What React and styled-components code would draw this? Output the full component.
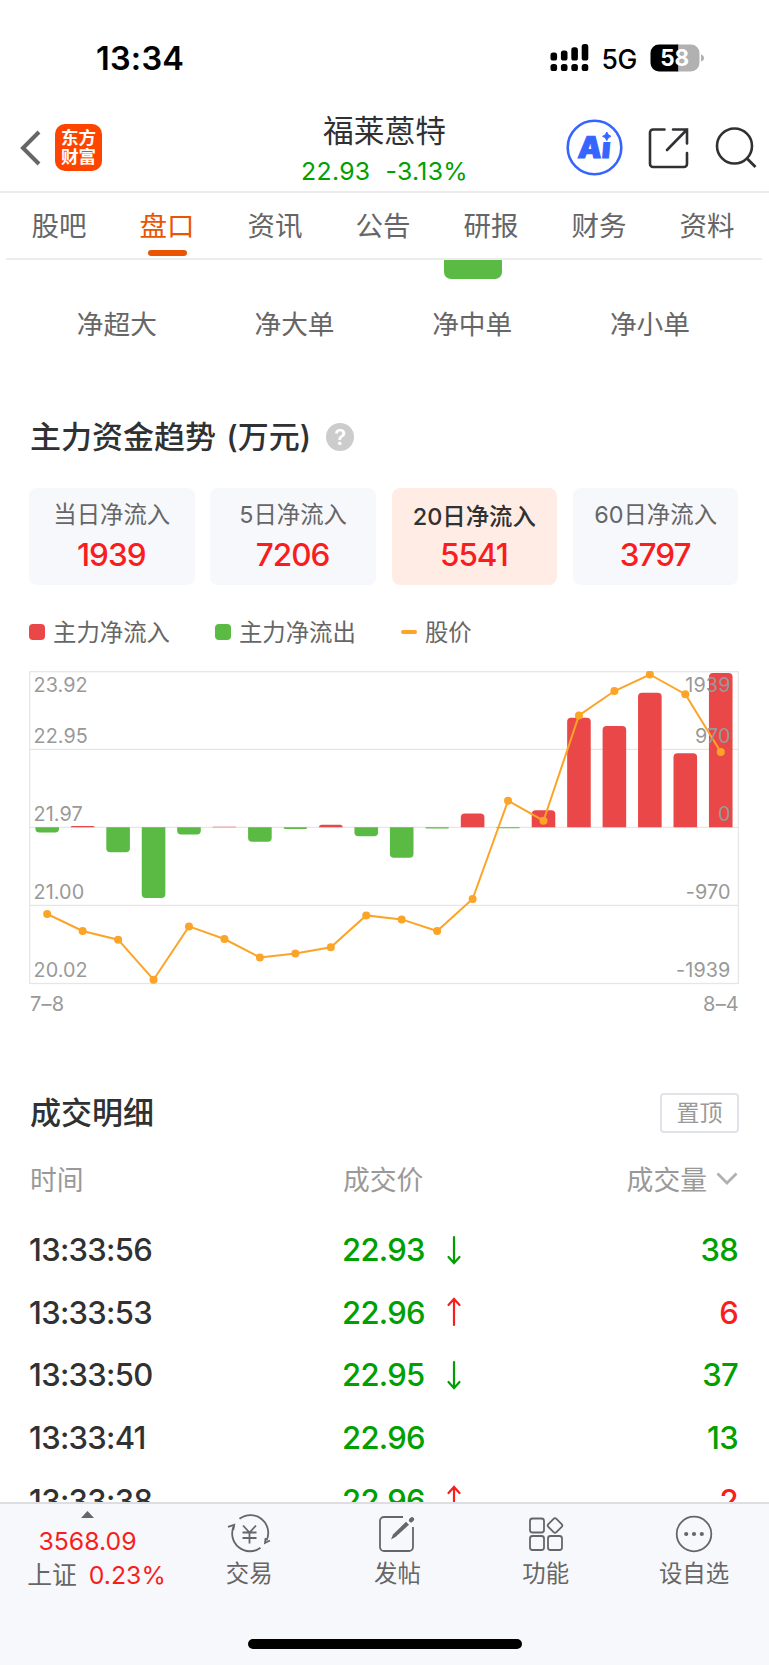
import React from 'react'
import styled, { createGlobalStyle } from 'styled-components'

const GlobalStyle = createGlobalStyle`
    * {
        box-sizing: border-box;
    }

    body {
        margin: 0;
        background: #fff;
        font-family: 'Inter', 'Noto Sans CJK SC', sans-serif;
        color: #303133;
    }
`;

const Screen = styled.div`
    width: 769px;
    height: 1665px;
    display: flex;
    flex-direction: column;
    overflow: hidden;
    background: #fff;
`;

const StatusBar = styled.div`
    height: 98px;
    padding: 17px 65px 0 96px;
    display: flex;
    align-items: center;
    flex-shrink: 0;
    color: #000;
`;

const Clock = styled.span`
    flex: 1;
    padding-top: 1px;
    font-size: 32.5px;
    font-weight: 600;
    letter-spacing: 0.2px;
`;

const Network = styled.span`
    margin: 2px 13px 0 12px;
    font-size: 26.5px;
    font-weight: 500;
    letter-spacing: -0.3px;
`;

const NavBar = styled.header`
    height: 95px;
    padding: 0 12px 0 20px;
    display: grid;
    grid-template-columns: 1fr auto 1fr;
    align-items: center;
    flex-shrink: 0;
    border-bottom: 2px solid #ececec;
`;

const NavSide = styled.div`
    height: 93px;
    padding-top: 6px;
    display: flex;
    align-items: center;
    justify-content: ${props => props.$end ? 'flex-end' : 'flex-start'};
    gap: ${props => props.$end ? '25px' : '14px'};
`;

const AppLogo = styled.div`
    width: 47px;
    height: 47px;
    border-radius: 10px;
    background: #ff4400;
    color: #fff;
    font-size: 17.5px;
    font-weight: 700;
    line-height: 19px;
    padding-top: 4px;
    text-align: center;
`;

const StockTitle = styled.div`
    display: flex;
    flex-direction: column;
    align-items: center;
    padding-top: 12px;
    margin-right: 8px;
`;

const StockName = styled.h1`
    margin: 0;
    font-size: 30.7px;
    font-weight: 400;
    line-height: 42px;
`;

const StockQuote = styled.div`
    display: flex;
    gap: 15px;
    font-size: 24.8px;
    line-height: 39px;
    letter-spacing: 0.3px;
    color: #00a000;
`;

const Tabs = styled.nav`
    height: 67px;
    margin: 0 7px 0 6px;
    display: grid;
    grid-template-columns: repeat(7, 108px);
    flex-shrink: 0;
    border-bottom: 2px solid #ececec;
`;

const Tab = styled.div`
    display: flex;
    flex-direction: column;
    align-items: center;
    height: 65px;
    font-size: 27.5px;
    line-height: 67px;
    padding-right: 2px;
    color: ${props => props.$active ? '#ea5504' : '#666'};

    &::after {
        content: '';
        width: 39px;
        height: 6px;
        margin: -10px 0 0 1px;
        border-radius: 3px;
        background: ${props => props.$active ? '#ea5504' : 'transparent'};
    }
`;

const Content = styled.main`
    flex: 1;
    min-height: 0;
    overflow: hidden;
    padding: 0 30px 0 29px;
`;

const OrderSizes = styled.div`
    display: grid;
    grid-template-columns: repeat(4, 177.7px);
`;

const OrderSize = styled.div`
    height: 90px;
    display: flex;
    flex-direction: column;
    align-items: center;
    font-size: 26.7px;
    line-height: 90px;
    text-indent: -2px;
    color: #666;

    &::before {
        content: '';
        width: 58px;
        height: 19px;
        flex-shrink: 0;
        border-radius: 0 0 7px 7px;
        background: ${props => props.$out ? '#5aba43' : 'transparent'};
    }
`;

const SectionHead = styled.div`
    height: 42px;
    margin-top: ${props => props.$top}px;
    display: flex;
    align-items: center;
    justify-content: ${props => props.$spread ? 'space-between' : 'flex-start'};
    gap: 15px;
`;

const SectionTitle = styled.h2`
    margin: 0;
    padding: 0 0 0 1px;
    font-size: 31px;
    font-weight: 500;
    line-height: 41px;
    height: 42px;
    word-spacing: 2px;
    white-space: pre;
`;

const Help = styled.span`
    width: 28px;
    height: 28px;
    border-radius: 50%;
    background: #ccc;
    color: #fff;
    font-size: 22px;
    font-weight: 600;
    line-height: 28px;
    text-align: center;
`;

const Periods = styled.div`
    margin-top: 30px;
    display: grid;
    grid-template-columns: repeat(4, 165.6px);
    gap: 15.7px;
`;

const Period = styled.div`
    height: 97px;
    padding-top: ${props => props.$active ? 12 : 10}px;
    border-radius: 8px;
    background: ${props => props.$active ? '#ffede5' : '#f7f8fb'};
    color: ${props => props.$active ? '#303133' : '#666'};
    font-size: 23.4px;
    font-weight: ${props => props.$active ? 500 : 400};
    line-height: 34px;
    text-align: center;
`;

const PeriodValue = styled.div`
    margin-top: ${props => props.$active ? 3 : 5}px;
    font-size: 31.5px;
    font-weight: 500;
    line-height: 36px;
    letter-spacing: -1px;
    text-indent: -1px;
    color: #f91e1e;
`;

const Legend = styled.div`
    height: 34px;
    margin-top: 30px;
    display: flex;
    gap: 45px;
    font-size: 23.4px;
    line-height: 35px;
    color: #666;
`;

const LegendItem = styled.div`
    display: flex;
    gap: 8px;

    &::before {
        content: '';
        width: 16px;
        height: ${props => props.$line ? 4 : 16}px;
        margin-top: ${props => props.$line ? 15 : 9}px;
        border-radius: ${props => props.$line ? 2 : 4}px;
        background: ${props => props.$color};
    }
`;

const Chart = styled.svg`
    display: block;
    margin-top: 22px;
    font-size: 19.8px;
`;

const DateAxis = styled.div`
    display: flex;
    justify-content: space-between;
    margin-top: 2px;
    padding: 0 0 0 1px;
    font-size: 20px;
    line-height: 34px;
    letter-spacing: 0.2px;
    color: #999;
`;

const PinButton = styled.button`
    width: 79px;
    height: 40px;
    padding: 0;
    border: 2px solid #e2e3e9;
    border-radius: 4px;
    background: #fff;
    color: #999;
    font-family: inherit;
    font-size: 23px;
    line-height: 36px;
`;

const TradeRow = styled.div`
    height: 62.6px;
    padding-right: 1px;
    display: grid;
    grid-template-columns: 313px 98px 1fr auto;
    align-items: center;
    font-size: 31px;
    font-weight: 500;
    letter-spacing: -0.7px;
`;

const TradeHead = styled(TradeRow)`
    height: 64px;
    margin: 12px 0 8.5px;
    padding-left: 1px;
    grid-template-columns: 313px 1fr auto;
    font-size: 26.8px;
    font-weight: 400;
    letter-spacing: 0;
    color: #999;
`;

const Volume = styled.span`
    display: flex;
    align-items: center;
    gap: 9px;

    svg {
        margin-top: 2px;
    }
`;

const Amount = styled.span`
    color: ${props => props.$up ? '#f91e1e' : '#00a000'};
`;

const BottomBar = styled.footer`
    height: 163px;
    flex-shrink: 0;
    display: flex;
    flex-direction: column;
    align-items: center;
    justify-content: space-between;
    border-top: 2px solid #dcdee1;
    background: #f7f8fb;
`;

const Actions = styled.div`
    align-self: stretch;
    display: grid;
    grid-template-columns: 175px repeat(4, 148.3px);
`;

const IndexQuote = styled.div`
    padding-top: 7px;
    display: flex;
    flex-direction: column;
    align-items: center;
    font-size: 24.8px;
    line-height: 34px;
    color: #f91e1e;
`;

const IndexValue = styled.span`
    margin-top: 6px;
`;

const IndexChange = styled.span`
    display: flex;
    gap: 12px;
    padding-left: 18px;
`;

const IndexName = styled.span`
    color: #666;
`;

const Action = styled.div`
    padding-top: 10px;
    display: flex;
    flex-direction: column;
    align-items: center;
    font-size: 23.4px;
    line-height: 34px;
    color: #666;
`;

const ActionIcon = styled.svg`
    display: block;
    width: 44px;
    height: 40px;
    margin-bottom: 3px;
    fill: none;
    stroke: #666;
    stroke-width: 1.8;
`;

const HomeIndicator = styled.div`
    width: 274px;
    height: 10px;
    margin-bottom: 16px;
    border-radius: 5px;
    background: #000;
`;

const tabs = ['股吧', '盘口', '资讯', '公告', '研报', '财务', '资料']
const orderSizes = ['净超大', '净大单', '净中单', '净小单']

const periods = [
    { label: '当日净流入', value: '1939' },
    { label: '5日净流入', value: '7206' },
    { label: '20日净流入', value: '5541' },
    { label: '60日净流入', value: '3797' },
]

// height of each day's bar, positive is inflow
const flows = [-5.3, 1.2, -25, -70.7, -7.2, 0.5, -14.5, -1.6, 2.5, -9, -30.5, -1.3, 13.7, -0.9, 17, 109.5, 101.3, 134.5, 74, 154.3]

// closing price of each day, measured down from the top of the plot
const prices = [243, 260, 268.7, 308.7, 255.4, 268, 286.5, 282.6, 276.3, 244.4, 248.4, 260, 228, 129.7, 149.7, 44.4, 20, 3.5, 23.2, 81]

const axis = [
    { y: 21.2, price: '23.92', flow: '1939' },
    { y: 72.4, price: '22.95', flow: '970' },
    { y: 150.4, price: '21.97', flow: '0' },
    { y: 228.4, price: '21.00', flow: '-970' },
    { y: 306.4, price: '20.02', flow: '-1939' },
]

const trades = [
    { time: '13:33:56', price: '22.93', move: 'down', volume: '38' },
    { time: '13:33:53', price: '22.96', move: 'up', volume: '6', buy: true },
    { time: '13:33:50', price: '22.95', move: 'down', volume: '37' },
    { time: '13:33:41', price: '22.96', volume: '13' },
    { time: '13:33:38', price: '22.96', move: 'up', volume: '2', buy: true },
]

const dayX = i => 18.2 + i * 35.45

// one bar with only the end away from the zero line rounded
function barPath(i, flow) {
    const zero = 156.3
    const left = dayX(i) - 11.8
    const right = dayX(i) + 11.8
    const end = zero - flow
    const r = Math.min(4, Math.abs(flow))
    const back = flow > 0 ? r : -r
    return `M${left} ${zero}V${end + back}Q${left} ${end} ${left + r} ${end}H${right - r}Q${right} ${end} ${right} ${end + back}V${zero}Z`
}

function TrendChart() {
    return (
        <Chart width="710" height="314" viewBox="0 0 710 314">
            <g fill="none" stroke="#e6e6e6" strokeWidth="1.3">
                <rect x="0.7" y="0.7" width="708.7" height="311.8" />
                <path d="M0.7 78.4H709.4M0.7 156.4H709.4M0.7 234.4H709.4" />
            </g>
            {flows.map((flow, i) => (
                <path
                    key={i}
                    d={barPath(i, flow)}
                    fill={flow > 0 ? '#ea4748' : '#5aba43'}
                />
            ))}
            <polyline
                points={prices.map((y, i) => `${dayX(i)},${y}`).join(' ')}
                fill="none"
                stroke="#fba428"
                strokeWidth="2"
            />
            {prices.map((y, i) => <circle key={i} cx={dayX(i)} cy={y} r="4" fill="#fba428" />)}
            <g fill="#999" letterSpacing="0.1">
                {axis.map(tick => (
                    <React.Fragment key={tick.price}>
                        <text x="4.5" y={tick.y}>{tick.price}</text>
                        <text x="701.5" y={tick.y} textAnchor="end">{tick.flow}</text>
                    </React.Fragment>
                ))}
            </g>
        </Chart>
    )
}

function MoveArrow({ move }) {
    if (!move) return <span />
    return (
        <svg width="28" height="30" viewBox="0 0 28 30" fill="none" strokeWidth="2.2" strokeLinecap="round" stroke={move === 'up' ? '#f91e1e' : '#00a000'}>
            <path d={move === 'up' ? 'M14 28V2M8.5 8L14 2L19.5 8' : 'M14 2V28M8.5 22L14 28L19.5 22'} />
        </svg>
    )
}

function SignalIcon() {
    return (
        <svg width="39" height="28" viewBox="0 0 39 28">
            {[8, 10, 13.2, 16.5].map((height, i) => (
                <React.Fragment key={i}>
                    <rect x={0.5 + i * 10.4} y={16.5 - height} width="6.6" height={height} rx="2.6" />
                    <rect x={0.5 + i * 10.4} y="20" width="6.6" height="7" rx="2.6" />
                </React.Fragment>
            ))}
        </svg>
    )
}

function BatteryIcon() {
    return (
        <svg width="54" height="28" viewBox="0 0 54 28">
            <path d="M9 0.5H28.5V27.5H9A8.5 8.5 0 0 1 0.5 19V9A8.5 8.5 0 0 1 9 0.5Z" fill="#000" />
            <path d="M28.5 0.5H41A8.5 8.5 0 0 1 49.5 9V19A8.5 8.5 0 0 1 41 27.5H28.5Z" fill="#b1b1b1" />
            <path d="M51 10.5Q54 11.5 54 14Q54 16.5 51 17.5Z" fill="#b1b1b1" />
            <text x="24.7" y="22" textAnchor="middle" fontSize="22.5" fontWeight="700" fill="#fff">58</text>
        </svg>
    )
}

function AiIcon() {
    return (
        <svg width="57" height="57" viewBox="0 0 57 57">
            <circle cx="28.5" cy="28.5" r="26.8" fill="#fff" stroke="#3564ff" strokeWidth="2.6" />
            <g transform="translate(11.3 38.5) skewX(-5)" fill="#3564ff" fontWeight="900">
                <text fontSize="30" textLength="32.5" stroke="#3564ff" strokeWidth="1">Ai</text>
            </g>
            <rect x="34.5" y="12.5" width="12.5" height="10.5" fill="#fff" />
            <path d="M40.8 13Q41.7 16.5 45 17.3Q41.7 18.1 40.8 21.5Q39.9 18.1 36.6 17.3Q39.9 16.5 40.8 13Z" fill="#3564ff" stroke="#3564ff" />
        </svg>
    )
}

function TradeIcon() {
    return (
        <ActionIcon viewBox="0 0 44 40">
            <path d="M12.5 4.8A17.8 17.8 0 0 1 39.5 26.5M33.5 33.8A17.8 17.8 0 0 1 6.8 12" />
            <path d="M1 12.8L7.2 10.8L6.2 16M43 26.5L38 29L38.6 24" />
            <path d="M16 11.5L22.5 18.5L29 11.5M22.5 18.5V29.5M15.5 18.5H29.5M15.5 24H29.5" />
        </ActionIcon>
    )
}

function PostIcon() {
    return (
        <ActionIcon viewBox="0 0 44 40">
            <path d="M28 3H9A4 4 0 0 0 5 7V33A4 4 0 0 0 9 37H34A4 4 0 0 0 38 33V13" />
            <path d="M36 6.3L37 5.3" strokeWidth="4.4" strokeLinecap="round" />
            <path d="M16 25.5L18 20.5L31 7.8L34 10.8L20.5 23Z" fill="#666" stroke="none" />
        </ActionIcon>
    )
}

function FeaturesIcon() {
    return (
        <ActionIcon viewBox="0 0 44 40">
            <rect x="6" y="4.5" width="14" height="14" rx="2.5" />
            <rect x="6" y="22" width="14" height="14" rx="2.5" />
            <rect x="24" y="22" width="14" height="14" rx="2.5" />
            <rect x="25.3" y="5.8" width="11.4" height="11.4" rx="2" transform="rotate(45 31 11.5)" />
        </ActionIcon>
    )
}

function MoreIcon() {
    return (
        <ActionIcon viewBox="0 0 44 40">
            <circle cx="22" cy="20" r="17.3" />
            <g fill="#666" stroke="none">
                <circle cx="14.2" cy="20" r="2.1" />
                <circle cx="22" cy="20" r="2.1" />
                <circle cx="29.8" cy="20" r="2.1" />
            </g>
        </ActionIcon>
    )
}

export default function App() {
    return (
        <Screen>
            <GlobalStyle />
            <StatusBar>
                <Clock>13:34</Clock>
                <SignalIcon />
                <Network>5G</Network>
                <BatteryIcon />
            </StatusBar>
            <NavBar>
                <NavSide>
                    <svg width="21" height="36" viewBox="0 0 21 36" fill="none" stroke="#666" strokeWidth="4">
                        <path d="M19 2L3 18L19 34" />
                    </svg>
                    <AppLogo>东方<br />财富</AppLogo>
                </NavSide>
                <StockTitle>
                    <StockName>福莱蒽特</StockName>
                    <StockQuote>
                        <span>22.93</span>
                        <span>-3.13%</span>
                    </StockQuote>
                </StockTitle>
                <NavSide $end>
                    <AiIcon />
                    <svg width="42" height="42" viewBox="0 0 42 42" fill="none" stroke="#303133" strokeWidth="2.6" strokeLinecap="round">
                        <path d="M16.5 2.5H5A3 3 0 0 0 2 5.5V37A3 3 0 0 0 5 40H36A3 3 0 0 0 39 37V26M25 2.5H39V16.5M39 2.5L19 23" />
                    </svg>
                    <svg width="42" height="42" viewBox="0 0 42 42" fill="none" stroke="#303133" strokeWidth="2.6">
                        <circle cx="19.5" cy="19" r="17.5" />
                        <path d="M31.5 31L40.5 40" strokeWidth="2.8" />
                    </svg>
                </NavSide>
            </NavBar>
            <Tabs>
                {tabs.map(tab => <Tab key={tab} $active={tab === '盘口'}>{tab}</Tab>)}
            </Tabs>
            <Content>
                <OrderSizes>
                    {orderSizes.map(size => <OrderSize key={size} $out={size === '净中单'}>{size}</OrderSize>)}
                </OrderSizes>
                <SectionHead $top={66}>
                    <SectionTitle>主力资金趋势 (万元)</SectionTitle>
                    <Help>?</Help>
                </SectionHead>
                <Periods>
                    {periods.map((period, i) => (
                        <Period key={period.label} $active={i === 2}>
                            {period.label}
                            <PeriodValue $active={i === 2}>{period.value}</PeriodValue>
                        </Period>
                    ))}
                </Periods>
                <Legend>
                    <LegendItem $color="#ea4748">主力净流入</LegendItem>
                    <LegendItem $color="#5aba43">主力净流出</LegendItem>
                    <LegendItem $color="#fba428" $line>股价</LegendItem>
                </Legend>
                <TrendChart />
                <DateAxis>
                    <span>7–8</span>
                    <span>8–4</span>
                </DateAxis>
                <SectionHead $top={71} $spread>
                    <SectionTitle>成交明细</SectionTitle>
                    <PinButton>置顶</PinButton>
                </SectionHead>
                <TradeHead>
                    <span>时间</span>
                    <span>成交价</span>
                    <Volume>
                        成交量
                        <svg width="22" height="14" viewBox="0 0 22 14" fill="none" stroke="#b0b0b0" strokeWidth="2.8">
                            <path d="M1.5 1.5L11 11L20.5 1.5" />
                        </svg>
                    </Volume>
                </TradeHead>
                {trades.map(trade => (
                    <TradeRow key={trade.time}>
                        <span>{trade.time}</span>
                        <Amount>{trade.price}</Amount>
                        <MoveArrow move={trade.move} />
                        <Amount $up={trade.buy}>{trade.volume}</Amount>
                    </TradeRow>
                ))}
            </Content>
            <BottomBar>
                <Actions>
                    <IndexQuote>
                        <svg width="13" height="7" viewBox="0 0 13 7">
                            <path d="M0 7L6.5 0L13 7Z" fill="#666" />
                        </svg>
                        <IndexValue>3568.09</IndexValue>
                        <IndexChange>
                            <IndexName>上证</IndexName>
                            0.23%
                        </IndexChange>
                    </IndexQuote>
                    <Action><TradeIcon />交易</Action>
                    <Action><PostIcon />发帖</Action>
                    <Action><FeaturesIcon />功能</Action>
                    <Action><MoreIcon />设自选</Action>
                </Actions>
                <HomeIndicator />
            </BottomBar>
        </Screen>
    )
}
